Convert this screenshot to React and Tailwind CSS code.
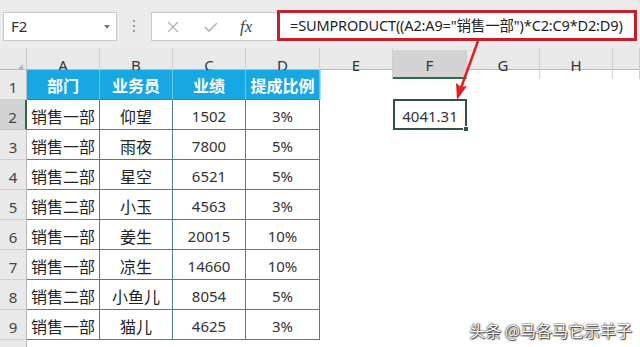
import React from "react";

const rows = [
  ["销售一部", "仰望", "1502", "3%"],
  ["销售一部", "雨夜", "7800", "5%"],
  ["销售二部", "星空", "6521", "5%"],
  ["销售二部", "小玉", "4563", "3%"],
  ["销售一部", "姜生", "20015", "10%"],
  ["销售一部", "凉生", "14660", "10%"],
  ["销售二部", "小鱼儿", "8054", "5%"],
  ["销售一部", "猫儿", "4625", "3%"],
];

const cols = ["A", "B", "C", "D", "E", "F", "G", "H", ""];
const grid = "grid grid-cols-[27px_73px_73px_73px_74px_73px_74px_73px_73px_1fr]";

function RowHead({ n, active }) {
  return (
    <div
      className={
        "h-[30px] flex items-center justify-center pt-[6px] text-[15px] text-[#444] border-b " +
        (active
          ? "bg-[#d3d3d3] border-b-[#c4c4c4] border-r-2 border-r-[#2e6b48]"
          : "bg-[#e9e9e9] border-b-[#d0d0d0] border-r border-r-[#b8b8b8]")
      }
    >
      {n}
    </div>
  );
}

export default function App() {
  return (
    <div className="relative w-[640px] h-[347px] overflow-hidden bg-white font-['Noto_Sans','Noto_Sans_CJK_SC',sans-serif] text-[#222]">
      {/* Toolbar */}
      <div className="h-[48px] bg-[#ebebeb] flex items-start pt-[11px] pl-[3px]">
        <div className="w-[114px] h-[29px] mt-[1px] bg-white border border-[#c9c9c9] flex items-center justify-between pl-[7px] pr-[6px]">
          <span className="text-[15px] text-[#333]">F2</span>
          <span className="w-0 h-0 border-l-[3px] border-r-[3px] border-t-[4px] border-l-transparent border-r-transparent border-t-[#777]" />
        </div>
        <div className="w-[34px] flex flex-col items-center gap-[3px] pt-[9px]">
          <span className="w-[2px] h-[2px] bg-[#999]" />
          <span className="w-[2px] h-[2px] bg-[#999]" />
          <span className="w-[2px] h-[2px] bg-[#999]" />
        </div>
        <div className="w-[126px] h-[29px] mt-[1px] bg-white border border-[#c9c9c9] border-r-0 flex items-center pl-[14px]">
          <svg width="14" height="14" viewBox="0 0 14 14" className="text-[#b4b4b4]">
            <path d="M2 2 L12 12 M12 2 L2 12" stroke="currentColor" strokeWidth="1.4" />
          </svg>
          <svg width="16" height="14" viewBox="0 0 16 14" className="ml-[23px] text-[#b4b4b4]">
            <path d="M2 7 L6 11 L14 3" stroke="currentColor" strokeWidth="1.6" fill="none" />
          </svg>
          <span className="ml-[21px] font-['Liberation_Serif',serif] italic text-[17px] text-[#444]">fx</span>
        </div>
        <div className="w-[360px] h-[31px] -mt-[1px] bg-white border-[3px] border-[#c3202b] flex items-center pl-[10px] pt-[1px]">
          <span className="text-[14.5px] text-[#222] whitespace-nowrap tracking-[-0.15px]">
            =SUMPRODUCT((A2:A9="销售一部")*C2:C9*D2:D9)
          </span>
        </div>
      </div>

      {/* Column headers */}
      <div className={grid + " h-[22px] bg-[#e9e9e9] border-b border-[#b9b9b9]"}>
        <div className="flex items-end justify-end pr-[3px] pb-[3px] border-r border-[#c9c9c9]">
          <svg width="12" height="12" viewBox="0 0 12 12">
            <polygon points="12,0 12,12 0,12" fill="#b5b5b5" />
          </svg>
        </div>
        {cols.map((c, i) => (
          <div
            key={i}
            className={
              "flex items-center justify-center pt-[4px] text-[15px] text-[#333] border-r border-[#cfcfcf] " +
              (c === "F" ? "bg-[#d3d3d3] mt-[2px] border-b-2 border-b-[#2e6b48]" : "")
            }
          >
            {c}
          </div>
        ))}
      </div>

      {/* Row 1 */}
      <div className={grid}>
        <RowHead n="1" />
        {["部门", "业务员", "业绩", "提成比例"].map((t) => (
          <div
            key={t}
            className="h-[30px] bg-[#17a7e2] text-white text-[16px] font-bold flex items-center justify-center pt-[2px] border-r border-r-[#6cc6ea] border-b border-b-[#4f7f86]"
          >
            {t}
          </div>
        ))}
        <div className="border-l border-[#a9dcf0]" />
      </div>

      {/* Data rows */}
      {rows.map((r, i) => (
        <div key={i} className={grid}>
          <RowHead n={String(i + 2)} active={i === 0} />
          {r.map((v, j) => (
            <div
              key={j}
              className={
                "h-[30px] flex items-center pt-[4px] border-r border-b border-[#4f7f86] " +
                (j === 0 ? "justify-start pl-[4px] text-[16px] text-[#222]" : "justify-center ") +
                (j === 1 ? "text-[16px] text-[#222]" : "") +
                (j > 1 ? "text-[15px] text-[#333]" : "")
              }
            >
              {v}
            </div>
          ))}
          <div className="h-[30px]" />
          {i === 0 ? (
            <div className="relative h-[31px] -mt-[1px] border-2 border-[#2f5443] flex items-center justify-center pt-[3px] text-[15px] text-[#333]">
              4041.31
              <span className="absolute -right-[4px] -bottom-[4px] w-[6px] h-[6px] bg-[#2f5443] border border-white" />
            </div>
          ) : (
            <div className="h-[30px]" />
          )}
        </div>
      ))}

      {/* Row 10 (partial) */}
      <div className={grid}>
        <div className="h-[30px] bg-[#e9e9e9] border-r border-[#b8b8b8]" />
      </div>

      {/* Arrow */}
      <svg className="absolute left-0 top-0 pointer-events-none" width="640" height="347">
        <line x1="478" y1="41" x2="461" y2="88" stroke="#e21f26" strokeWidth="2.5" />
        <polygon points="457,100 456,83 461,87 467,86" fill="#e21f26" />
      </svg>

      {/* Watermark */}
      <div className="absolute right-[8px] top-[318px] text-[16px] text-white font-['Noto_Sans_CJK_SC',sans-serif] [text-shadow:0_0_2px_#222,0_0_1px_#222,1px_1px_1px_#555]">
        头条 @马各马它示羊子
      </div>
    </div>
  );
}
